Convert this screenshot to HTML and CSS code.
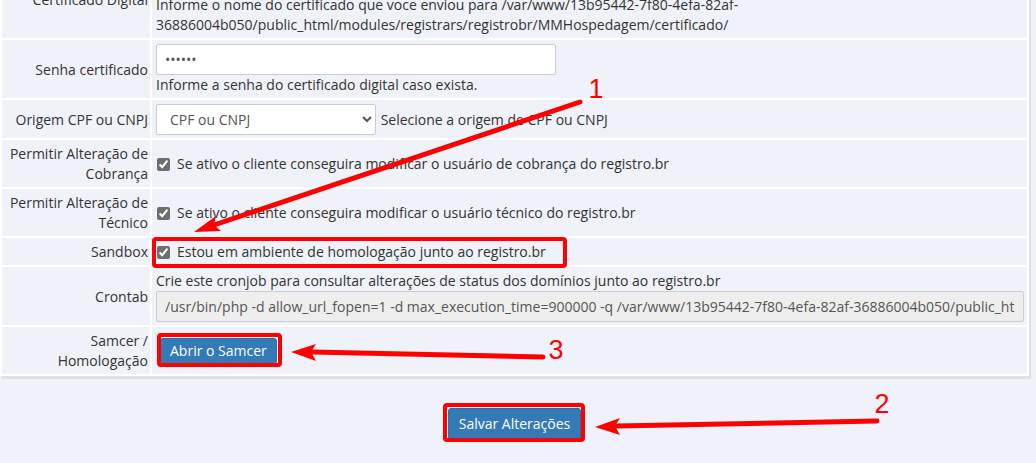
FILE: index.html
```html
<!DOCTYPE html>
<html lang="pt-BR">
  <head>
    <meta charset="UTF-8" />
    <meta name="viewport" content="width=device-width, initial-scale=1.0" />
    <title>Registro.br - Configurações</title>
    <link rel="stylesheet" href="styles.css">
  </head>
  <body>
    <div class="page">
      <div class="panel">
        <table class="form-table">
          <tr>
            <td class="label">Certificado Digital</td>
            <td class="field">
              <input type="text" class="text-input" value="" />
              <div class="help">
                Informe o nome do certificado que voce enviou para /var/www/13b95442-7f80-4efa-82af-<br />36886004b050/public_html/modules/registrars/registrobr/MMHospedagem/certificado/
              </div>
            </td>
          </tr>
          <tr>
            <td class="label">Senha certificado</td>
            <td class="field">
              <input type="password" class="text-input pass-input" value="123456" />
              <div class="help">Informe a senha do certificado digital caso exista.</div>
            </td>
          </tr>
          <tr>
            <td class="label">Origem CPF ou CNPJ</td>
            <td class="field">
              <select class="select-input">
                <option>CPF ou CNPJ</option>
                <option>CPF</option>
                <option>CNPJ</option>
              </select>
              Selecione a origem de CPF ou CNPJ
            </td>
          </tr>
          <tr>
            <td class="label">Permitir Alteração de Cobrança</td>
            <td class="field">
              <label><input type="checkbox" class="check" checked />Se ativo o cliente conseguira modificar o usuário de cobrança do registro.br</label>
            </td>
          </tr>
          <tr>
            <td class="label">Permitir Alteração de Técnico</td>
            <td class="field">
              <label><input type="checkbox" class="check" checked />Se ativo o cliente conseguira modificar o usuário técnico do registro.br</label>
            </td>
          </tr>
          <tr>
            <td class="label">Sandbox</td>
            <td class="field">
              <label><input type="checkbox" class="check" checked />Estou em ambiente de homologação junto ao registro.br</label>
            </td>
          </tr>
          <tr>
            <td class="label">Crontab</td>
            <td class="field">
              <div>Crie este cronjob para consultar alterações de status dos domínios junto ao registro.br</div>
              <input type="text" class="text-input cron-input" readonly value="/usr/bin/php -d allow_url_fopen=1 -d max_execution_time=900000 -q /var/www/13b95442-7f80-4efa-82af-36886004b050/public_html/modules/registrars/registrobr/cron.php" />
            </td>
          </tr>
          <tr>
            <td class="label">Samcer / Homologação</td>
            <td class="field">
              <button class="btn btn-primary btn-small">Abrir o Samcer</button>
            </td>
          </tr>
        </table>
      </div>

      <div class="actions">
        <button class="btn btn-primary">Salvar Alterações</button>
      </div>

      <!-- marcações do print -->
      <svg class="annotations" width="1036" height="463" viewBox="0 0 1036 463">
        <g fill="none" stroke="#ff0000" stroke-width="4">
          <rect x="154" y="239" width="411" height="27" rx="2" />
          <rect x="159" y="335" width="121" height="30" rx="2" />
          <rect x="445" y="405" width="138" height="35" rx="2" />
        </g>
        <g stroke="#ff0000" stroke-width="5" stroke-linecap="round">
          <line x1="580" y1="102" x2="214" y2="225" />
          <line x1="543" y1="357" x2="312" y2="352" />
          <line x1="877" y1="421" x2="616" y2="426" />
        </g>
        <g fill="#ff0000">
          <polygon points="194,232 221,231 214,225 216,216" />
          <polygon points="291,352 316,344 311,352 316,361" />
          <polygon points="595,427 620,418 615,426 620,435" />
        </g>
        <g class="marks" fill="#ff0000" text-anchor="middle">
          <text x="596" y="98">1</text>
          <text x="882" y="413">2</text>
          <text x="556" y="359">3</text>
        </g>
      </svg>
    </div>
  </body>
</html>
```

FILE: styles.css
```css
body {
  margin: 0;
  font-family: "Open Sans", "Noto Sans", sans-serif;
  font-size: 14px;
  line-height: 20px;
  color: #333;
  background-color: #eff2f9;
}
.page {
  position: relative;
  height: 463px;
  overflow: hidden;
}
.panel {
  width: 1029px;
  margin-top: -42px;
  background-color: #fff;
  box-shadow: 2px 3px 0 #dde1e6;
}
.form-table {
  width: 100%;
  border-collapse: separate;
  border-spacing: 2px;
}
.form-table td {
  background-color: #eff2f9;
  vertical-align: middle;
}
.label {
  width: 143px;
  padding: 4px 2px 3px 3px;
  text-align: right;
}
.field {
  padding: 4px 3px 3px 4px;
}
.text-input,
.select-input {
  height: 31px;
  box-sizing: border-box;
  border: 1px solid #ccc;
  border-radius: 2px;
  background-color: #fff;
  font-family: inherit;
  font-size: 14px;
  color: #555;
}
.text-input {
  display: block;
  width: 100%;
  padding: 4px 8px;
}
.pass-input {
  width: 400px;
}
.select-input {
  width: 220px;
  padding: 0 6px 0 9px;
  margin: 0 1px 0 0;
}
.cron-input {
  background-color: #eee;
  color: #555;
}
.check {
  width: 13px;
  height: 13px;
  margin: 0 7px 0 1px;
  vertical-align: -2px;
  accent-color: #6e6e6e;
}
.btn {
  font-family: inherit;
  font-size: 14px;
  line-height: 20px;
  border-radius: 3px;
  cursor: pointer;
}
.btn-primary {
  color: #fff;
  background-color: #337ab7;
  border: 1px solid #2e6da4;
  padding: 5px 10px;
}
.btn-small {
  padding: 2px 9px;
  margin-left: 4px;
}
.actions {
  width: 1029px;
  padding-top: 32px;
  text-align: center;
}
.annotations {
  position: absolute;
  top: 0;
  left: 0;
  pointer-events: none;
}
.marks {
  font-family: "Liberation Sans", sans-serif;
  font-size: 27px;
}
```
